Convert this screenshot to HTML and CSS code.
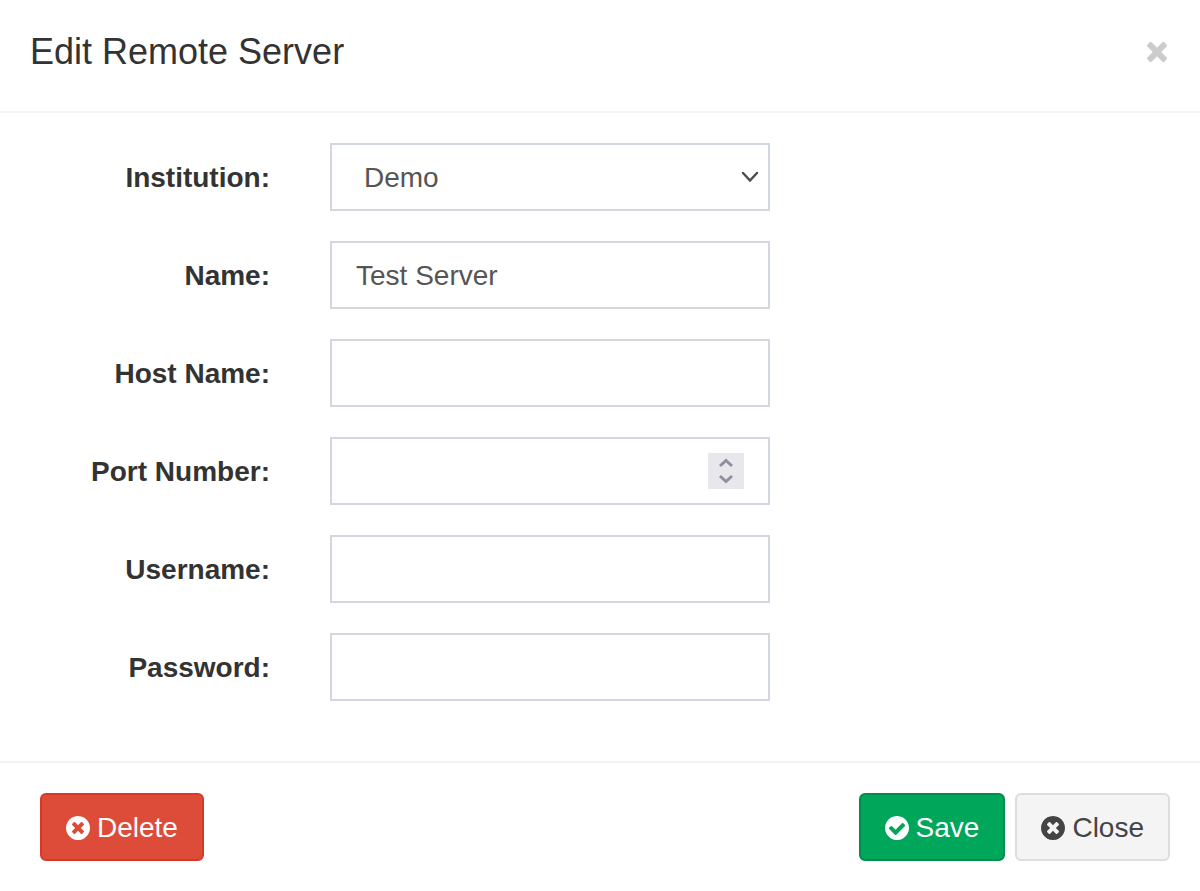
FILE: index.html
```html
<!DOCTYPE html>
<html lang="en">
<head>
<meta charset="utf-8">
<meta name="viewport" content="width=device-width, initial-scale=1">
<title>Edit Remote Server</title>
<link rel="stylesheet" href="styles.css">
</head>
<body>
<form class="modal" autocomplete="off">
  <header class="modal-header">
    <h1 class="modal-title">Edit Remote Server</h1>
    <button type="button" class="modal-dismiss" aria-label="Dismiss">
      <svg viewBox="1 0 24 24" fill="currentColor" aria-hidden="true">
        <rect x="0" y="9" width="24" height="6" rx="1" transform="rotate(45 12 12)"/>
        <rect x="0" y="9" width="24" height="6" rx="1" transform="rotate(-45 12 12)"/>
      </svg>
    </button>
  </header>

  <main class="modal-body">
    <div class="form-row">
      <label class="form-label" for="institution">Institution:</label>
      <div class="form-field">
        <select class="form-control form-select" id="institution"><option>Demo</option></select>
        <svg class="select-arrow" viewBox="0 0 18 12" aria-hidden="true"><path d="M2 2l7 7.500l7-7.500"/></svg>
      </div>
    </div>
    <div class="form-row">
      <label class="form-label" for="name">Name:</label>
      <div class="form-field"><input class="form-control" type="text" id="name" value="Test Server"></div>
    </div>
    <div class="form-row">
      <label class="form-label" for="host">Host Name:</label>
      <div class="form-field"><input class="form-control" type="text" id="host"></div>
    </div>
    <div class="form-row">
      <label class="form-label" for="port">Port Number:</label>
      <div class="form-field">
        <input class="form-control" type="number" id="port">
        <svg class="stepper" viewBox="0 0 36 36" aria-hidden="true"><path d="M12 13l6-5.500l6 5.500M12 23l6 5.500l6-5.500"/></svg>
      </div>
    </div>
    <div class="form-row">
      <label class="form-label" for="username">Username:</label>
      <div class="form-field"><input class="form-control" type="text" id="username"></div>
    </div>
    <div class="form-row">
      <label class="form-label" for="password">Password:</label>
      <div class="form-field"><input class="form-control" type="password" id="password"></div>
    </div>
  </main>

  <footer class="modal-footer">
    <button type="button" class="btn btn-danger">
      <svg class="btn-icon" viewBox="128 128 1536 1536" aria-hidden="true"><path d="M1277 1122q0-26-19-45l-181-181 181-181q19-19 19-45 0-27-19-46l-90-90q-19-19-46-19-26 0-45 19l-181 181-181-181q-19-19-45-19-27 0-46 19l-90 90q-19 19-19 46 0 26 19 45l181 181-181 181q-19 19-19 45 0 27 19 46l90 90q19 19 46 19 26 0 45-19l181-181 181 181q19 19 45 19 27 0 46-19l90-90q19-19 19-46zm387-226q0 209-103 385.5t-279.5 279.5-385.5 103-385.5-103-279.5-279.5-103-385.5 103-385.5 279.5-279.5 385.5-103 385.5 103 279.5 279.5 103 385.5z"/></svg>
      Delete
    </button>
    <div class="btn-group">
      <button type="submit" class="btn btn-success">
        <svg class="btn-icon" viewBox="128 128 1536 1536" aria-hidden="true"><path d="M1412 734q0-28-18-46l-91-90q-19-19-45-19t-45 19l-408 407-226-226q-19-19-45-19t-45 19l-91 90q-18 18-18 46 0 27 18 45l362 362q19 19 45 19 27 0 46-19l543-543q18-18 18-45zm252 162q0 209-103 385.5t-279.5 279.5-385.5 103-385.5-103-279.5-279.5-103-385.5 103-385.5 279.5-279.5 385.5-103 385.5 103 279.5 279.5 103 385.5z"/></svg>
        Save
      </button>
      <button type="button" class="btn btn-default">
        <svg class="btn-icon" viewBox="128 128 1536 1536" aria-hidden="true"><path d="M1277 1122q0-26-19-45l-181-181 181-181q19-19 19-45 0-27-19-46l-90-90q-19-19-46-19-26 0-45 19l-181 181-181-181q-19-19-45-19-27 0-46 19l-90 90q-19 19-19 46 0 26 19 45l181 181-181 181q-19 19-19 45 0 27 19 46l90 90q19 19 46 19 26 0 45-19l181-181 181 181q19 19 45 19 27 0 46-19l90-90q19-19 19-46zm387-226q0 209-103 385.5t-279.5 279.5-385.5 103-385.5-103-279.5-279.5-103-385.5 103-385.5 279.5-279.5 385.5-103 385.5 103 279.5 279.5 103 385.5z"/></svg>
        Close
      </button>
    </div>
  </footer>
</form>
</body>
</html>
```

FILE: styles.css
```css
* {
  box-sizing: border-box;
}

body {
  margin: 0;
  background: #fff;
  color: #333;
  font-family: "Liberation Sans", Arial, sans-serif;
  font-size: 28px;
  line-height: 40px;
}

.modal-header {
  display: flex;
  align-items: center;
  justify-content: space-between;
  padding: 30px 30px 37px;
  border-bottom: 2px solid #f4f4f4;
}

.modal-title {
  margin: 0;
  font-size: 36px;
  font-weight: 400;
  line-height: 44px;
}

.modal-dismiss {
  padding: 0;
  border: 0;
  background: none;
  color: #ccc;
}

.modal-dismiss svg {
  display: block;
  width: 24px;
  height: 24px;
}

.modal-body {
  display: grid;
  gap: 30px;
  padding: 30px 0 60px;
}

.form-row {
  display: grid;
  grid-template-columns: 3fr 5fr 4fr;
  align-items: center;
}

.form-label {
  padding: 2px 30px 0;
  font-weight: 700;
  text-align: right;
  white-space: nowrap;
}

.form-field {
  position: relative;
  padding: 0 30px;
}

.form-control {
  display: block;
  width: 100%;
  height: 68px;
  margin: 0;
  padding: 2px 24px 0;
  border: 2px solid #d2d6de;
  border-radius: 0;
  background: #fff;
  color: #555;
  font: inherit;
  appearance: none;
}

.form-control[type="number"] {
  appearance: textfield;
}

.form-select {
  padding: 2px 32px 0;
}

.select-arrow,
.stepper {
  position: absolute;
  top: 50%;
  transform: translateY(-50%);
  fill: none;
  pointer-events: none;
}

.select-arrow {
  right: 41px;
  width: 18px;
  height: 12px;
  stroke: #4d4d4d;
  stroke-width: 2.5;
  stroke-linecap: round;
}

.stepper {
  right: 56px;
  width: 36px;
  height: 36px;
  background: #e8e7ec;
  stroke: #918f9f;
  stroke-width: 3;
}

.modal-footer {
  display: flex;
  align-items: center;
  justify-content: space-between;
  padding: 30px 30px 30px 40px;
  border-top: 2px solid #f4f4f4;
}

.btn-group {
  display: flex;
  gap: 10px;
}

.btn {
  display: flex;
  align-items: center;
  gap: 7px;
  height: 68px;
  margin: 0;
  padding: 2px 24px 0;
  border: 2px solid;
  border-radius: 6px;
  font: inherit;
}

.btn-icon {
  width: 24px;
  height: 24px;
  fill: currentColor;
}

.btn-danger {
  border-color: #d73925;
  background: #dd4b39;
  color: #fff;
}

.btn-success {
  border-color: #008d4c;
  background: #00a65a;
  color: #fff;
}

.btn-default {
  border-color: #ddd;
  background: #f4f4f4;
  color: #444;
}
```
